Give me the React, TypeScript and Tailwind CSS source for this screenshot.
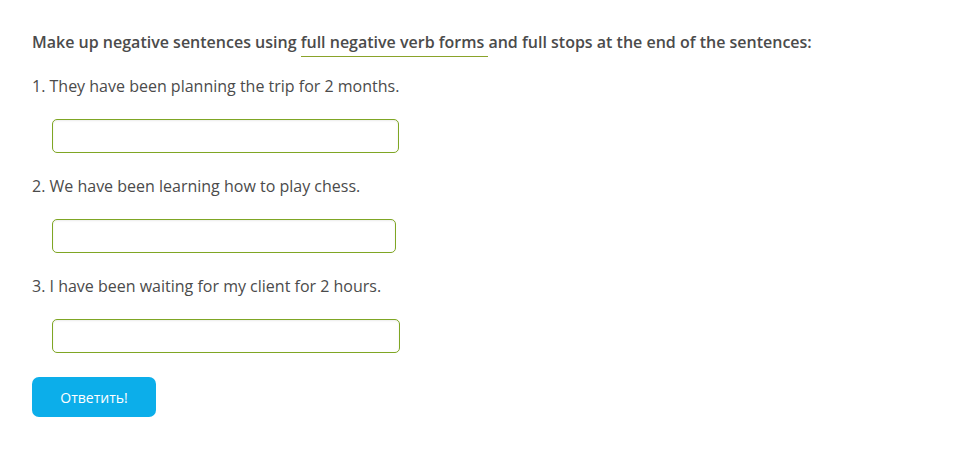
import React from "react";

const questions = [
  { text: "1. They have been planning the trip for 2 months.", width: "w-[347px]" },
  { text: "2. We have been learning how to play chess.", width: "w-[344px]" },
  { text: "3. I have been waiting for my client for 2 hours.", width: "w-[348px]" },
];

const App = () => {
  return (
    <div className="min-h-[449px] w-full bg-white pl-8 pt-[30px] font-['Open_Sans',sans-serif] text-[16px] text-[#4b4b4b]">
      <p className="font-semibold leading-6">
        Make up negative sentences using{" "}
        <span className="border-b border-[#8aa32a] pb-[3px]">full negative verb forms </span>
        and full stops at the end of the sentences:
      </p>

      <div className="mt-5 flex flex-col">
        {questions.map((q, i) => (
          <div key={i} className="flex flex-col">
            <p className="leading-6">{q.text}</p>
            <input
              type="text"
              className={`${q.width} ml-5 mt-[21px] mb-[21px] h-[34px] rounded-[5px] border border-[#7fa624] bg-white px-2 shadow-[inset_0_1px_2px_rgba(0,0,0,0.08)] outline-none`}
            />
          </div>
        ))}
      </div>

      <button className="mt-[3px] h-10 w-[124px] rounded-[7px] bg-[#0caeea] text-[14px] text-white">
        Ответить!
      </button>
    </div>
  );
};

export default App;
